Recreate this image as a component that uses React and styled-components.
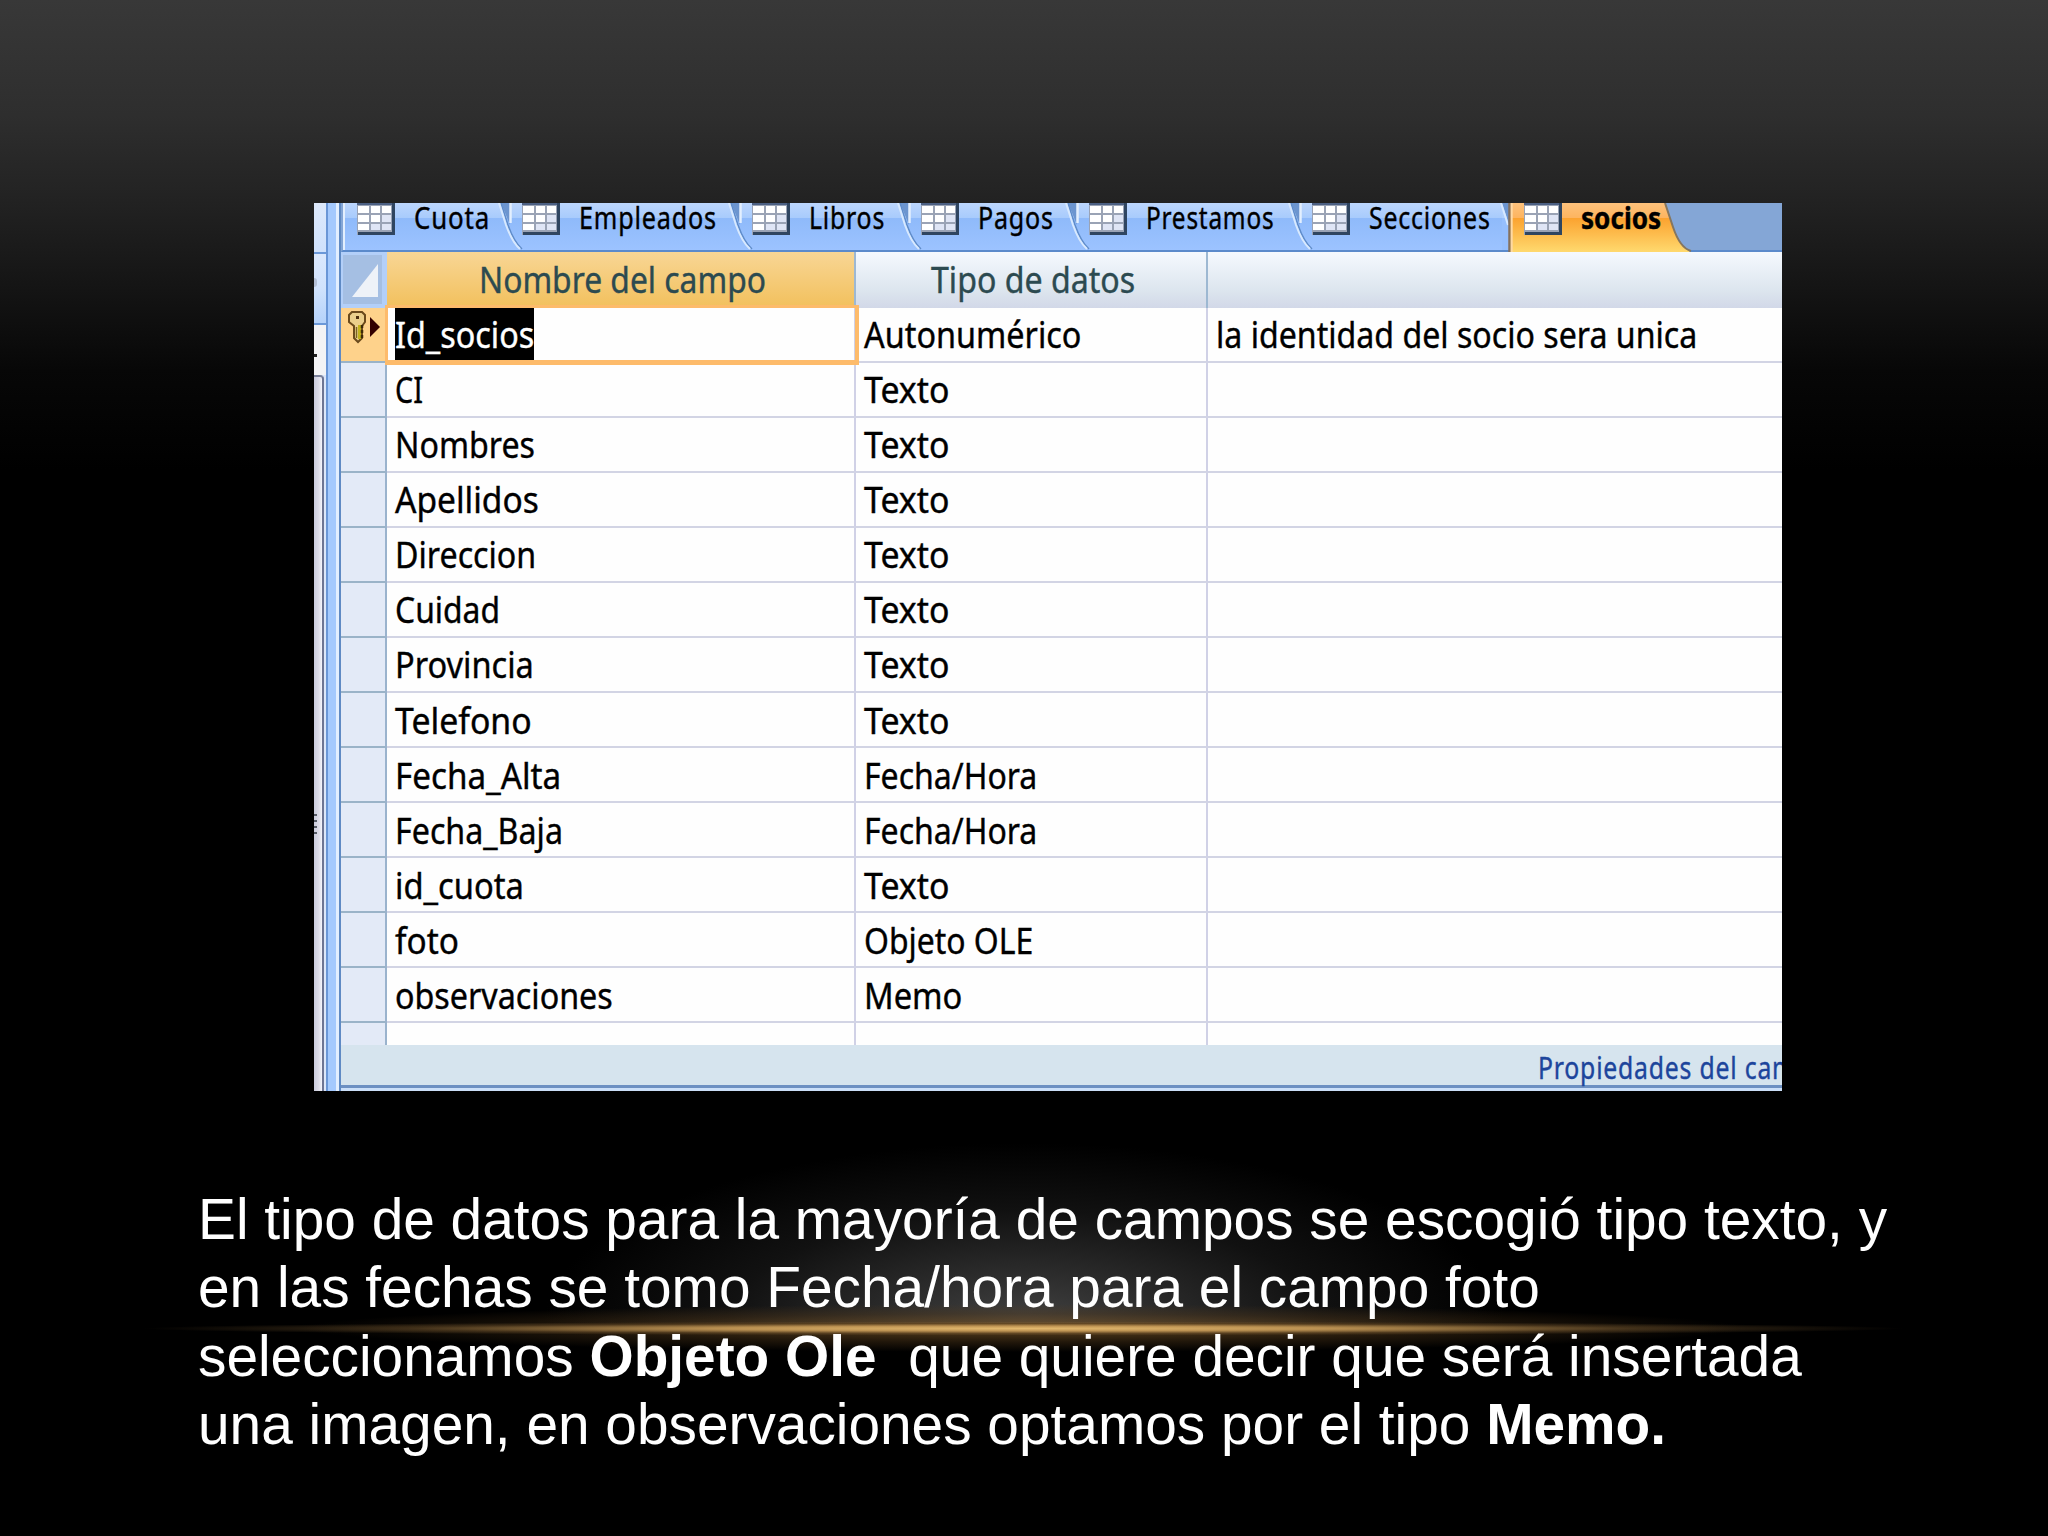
import React, { useLayoutEffect, useRef, useState } from "react";
import styled, { createGlobalStyle } from "styled-components";

const GlobalStyle = createGlobalStyle`
  * {
    box-sizing: border-box;
  }
  body {
    margin: 0;
    background-color: #000;
  }
`;

const Slide = styled.main`
  width: 2048px;
  height: 1536px;
  overflow: hidden;
  display: flex;
  flex-direction: column;
  padding-top: 203px;
  background: radial-gradient(ellipse 880px 7px at 1024px 1328.5px, #e3b96e 0%, rgba(208, 162, 92, 0.85) 35%, rgba(140, 104, 56, 0.4) 70%, transparent 100%),
    radial-gradient(ellipse 720px 24px at 1024px 1328px, rgba(115, 82, 38, 0.8) 0%, rgba(82, 57, 26, 0.4) 60%, transparent 100%),
    radial-gradient(ellipse 480px 180px at 50% 100%, #424242 0%, #2a2a2a 30%, #111 62%, transparent 100%) 0 1129px / 2048px 194px no-repeat,
    linear-gradient(#383838 0, #2e2e2e 115px, #232323 195px, #141414 290px, #070707 370px, #000 470px);
`;

const Window = styled.section`
  width: 1468px;
  height: 888px;
  margin-left: 314px;
  display: flex;
  overflow: hidden;
  font-family: "Noto Sans", "Open Sans", sans-serif;
  color: #000;
`;

const NavPane = styled.div`
  width: 12px;
  display: flex;
  flex-direction: column;
  background-color: #dce6f8;
`;

const NavTitle = styled.div`
  height: 51px;
  background: linear-gradient(#dde9fb, #cfe1fc);
  border-bottom: 2px solid #6b98d8;
`;

const NavGroup = styled.div`
  height: 71px;
  padding-top: 24px;
  background: linear-gradient(#dbe8fd, #d0e2fc 50%, #b5d2fa);
  border-bottom: 2px solid #6b98d8;
`;

const NavArrow = styled.div`
  width: 3px;
  height: 9px;
  border-radius: 0 4px 4px 0;
  background-color: #b3bfd6;
`;

const NavSearch = styled.div`
  height: 50px;
  padding-top: 29px;
  background-color: #f3f3f5;
`;

const NavDash = styled.div`
  width: 3px;
  height: 3px;
  background-color: #222;
`;

const NavScroll = styled.div`
  flex: 1;
  width: 10px;
  padding-top: 437px;
  border-top: 2px solid #7a8099;
  border-right: 2px solid #6d7492;
  border-top-right-radius: 4px;
  background: linear-gradient(90deg, #c9cbdc, #dcdce8 60%, #f4f4fa);
`;

const ScrollGrip = styled.div`
  width: 3px;
  height: 20px;
  background: repeating-linear-gradient(#555b66 0 2px, transparent 2px 6px);
`;

const Splitter = styled.div`
  width: 15px;
  border-left: 2px solid #6a96d6;
  border-right: 2px solid #5f8ac4;
  background: linear-gradient(90deg, #a4c9fd 0 8px, #e2eefe 8px);
`;

const Document = styled.div`
  width: 1441px;
  display: flex;
  flex-direction: column;
  -webkit-text-stroke: 0.4px;
`;

const TabBar = styled.div`
  height: 49px;
  display: flex;
  background-color: #84a6d6;
  border-bottom: 2px solid #5b8acb;
  border-left: 2px solid #84a6d6;
`;

const Tab = styled.div`
  width: ${(props) => props.$width}px;
  height: ${(props) => (props.$active ? 49 : 47)}px;
  flex-shrink: 0;
  display: flex;
  background: ${(props) =>
    props.$active
      ? "linear-gradient(#fdc27c 0, #fdb45f 15px, #fba22f 15px, #ffd96e 49px)"
      : "linear-gradient(#bcd6fd 0, #a8cbfc 15px, #8fbafa 15px, #9cc3ff 47px)"};
`;

const FirstEdge = styled.div`
  width: 14px;
  border-left: 2px solid #e3effe;
`;

const Drawing = styled.svg`
  display: block;
  flex-shrink: 0;
  overflow: visible;
`;

const TabLabel = styled.span`
  margin-left: 19px;
  font-size: 31px;
  line-height: 28px;
  font-weight: ${(props) => (props.$active ? 700 : 400)};
  letter-spacing: ${(props) => (props.$active ? 0 : 1)}px;
`;

const FitBox = styled.span`
  display: block;
  width: ${(props) => props.$width}px;
  flex-shrink: 0;
`;

const FitInner = styled.span`
  display: inline-block;
  white-space: pre;
  vertical-align: top;
  transform-origin: 0 50%;
`;

const HeaderRow = styled.div`
  height: 56px;
  display: flex;
`;

const SelectAll = styled.div`
  width: 46px;
  padding: 3px 5px 4px 2px;
  background-color: #b3cff8;
`;

const HeaderCell = styled.div`
  width: ${(props) => props.$width}px;
  display: flex;
  justify-content: center;
  padding-bottom: 3px;
  padding-left: 3px;
  align-items: center;
  font-size: 37px;
  line-height: 50px;
  color: #2c4a50;
  border-right: ${(props) => (props.$last ? "none" : "2px solid #9db8d2")};
  background: ${(props) =>
    props.$selected
      ? "linear-gradient(#f8d695, #f2c05c)"
      : "linear-gradient(#f5f9fe, #dce5ee 70%, #d2d8e8)"};
`;

const Row = styled.div`
  height: ${(props) => props.$height || 55.08}px;
  display: flex;
  flex-shrink: 0;
`;

const Selector = styled.div`
  width: 46px;
  flex-shrink: 0;
  padding-left: 7px;
  border-right: 2px solid #9ab3cd;
  border-bottom: ${(props) => (props.$partial ? "none" : "2px solid #9ab3c8")};
  background-color: ${(props) => (props.$current ? "#fed28b" : "#e3eaf7")};
`;

const Cell = styled.div`
  position: relative;
  width: ${(props) => props.$width}px;
  flex-shrink: 0;
  display: flex;
  align-items: center;
  padding-left: 8px;
  font-size: 37px;
  line-height: 50px;
  background-color: #fefefe;
  border-right: ${(props) => (props.$last ? "none" : "2px solid #d0d1e6")};
  border-bottom: ${(props) => (props.$partial ? "none" : "2px solid #d2d4e4")};
`;

const FocusRing = styled.div`
  position: absolute;
  z-index: 1;
  top: -3px;
  left: -2px;
  width: 474px;
  height: 60px;
  border: 4px solid #fdbb6b;
  border-left-width: 3px;
  border-top-width: 3px;
  border-bottom-width: 5px;
`;

const Selection = styled.div`
  height: 53px;
  display: flex;
  align-items: center;
  width: 139px;
  color: #fff;
  background-color: #000;
`;

const Footer = styled.div`
  height: 46px;
  padding: 3px 0 0 1197px;
  overflow: hidden;
  font-size: 31px;
  line-height: 39px;
  letter-spacing: 1px;
  color: #1d459c;
  background: linear-gradient(#d6e4ee 0 40px, #6d90c2 40px 43px, #cbdff8 43px);
`;

const Caption = styled.p`
  margin: 95px 0 0 198px;
  font-family: "Liberation Sans", Arial, sans-serif;
  font-size: 56.8px;
  line-height: 68.4px;
  white-space: pre;
  color: #fff;
`;

// Squeezes a run of text so that it takes exactly the given width
const Fit = ({ width, children }) => {
  const ref = useRef(null);
  const [scale, setScale] = useState(1);

  useLayoutEffect(() => {
    setScale(width / ref.current.offsetWidth);
  }, [width, children]);

  return (
    <FitBox $width={width}>
      <FitInner ref={ref} style={{ transform: `scaleX(${scale})` }}>
        {children}
      </FitInner>
    </FitBox>
  );
};

const TableIcon = () => (
  <Drawing width="38" height="32" viewBox="0 0 38 32">
    <rect width="38" height="32" fill="#9aa3b5" />
    <rect width="38" height="2" fill="#4c6083" />
    <rect x="35" width="3" height="32" fill="#2f4560" />
    <rect x="1" y="29" width="37" height="3" fill="#2f4560" />
    {[3, 12, 21].map((y, r) =>
      [1, 14, 25].map((x, c) => (
        <rect
          key={`${x}-${y}`}
          x={x}
          y={y}
          width={c === 0 ? 11 : 9}
          height={r === 2 ? 6 : 7}
          fill={c + r > 2 ? "#dfe5f5" : "#fff"}
        />
      ))
    )}
  </Drawing>
);

const TabEdge = () => (
  <Drawing width="22" height="47" viewBox="0 0 22 47">
    <path d="M1 0H10V22Z" fill="#6c95cf" />
    <path d="M10.5 0V20" stroke="#e3effe" strokeWidth="2.5" />
    <path d="M1 0L8 22Q14 39 22 46" fill="none" stroke="#5f8cc9" strokeWidth="1.5" />
    <path d="M-1 0L6 22Q12 39 20 46" fill="none" stroke="#d8e9fe" strokeWidth="2" />
  </Drawing>
);

const ActiveEdge = () => (
  <Drawing width="22" height="49" viewBox="0 0 22 49">
    <rect width="8" height="15" fill="#b0d0fd" />
    <rect y="15" width="8" height="32" fill="#96bffd" />
    <rect y="47" width="8" height="2" fill="#5b8acb" />
    <path d="M0 0H7V21Z" fill="#6c95cf" />
    <path d="M-1 0L6 22" stroke="#d8e9fe" strokeWidth="2" />
    <path d="M7.5 0V49" stroke="#85715c" strokeWidth="2.5" />
    <path d="M9.7 0V49" stroke="#fed9a4" strokeWidth="2" />
  </Drawing>
);

const ActiveEnd = () => (
  <Drawing width="35" height="49" viewBox="0 0 35 49">
    <path d="M4 0L12 24Q19 45 30 48.5H35.5V0Z" fill="#84a6d6" />
    <path d="M30 47H36V49H28Z" fill="#5b8acb" />
    <path d="M4 0L12 24Q19 45 30 48" fill="none" stroke="#85765f" strokeWidth="2" />
  </Drawing>
);

const KeyIcon = () => (
  <Drawing width="36" height="53" viewBox="0 0 36 53">
    <path
      d="M4 4H14L17 7V14L14 18V30L10 34L6 30V18L1 14V7Z"
      fill="#ebcf8c"
      stroke="#6b4a1c"
      strokeWidth="2"
    />
    <rect x="8" y="8" width="3" height="3" fill="#4d3010" />
    <path d="M11.5 17V31" stroke="#c2b21c" strokeWidth="3" />
    <path d="M14 17V31" stroke="#3c2a08" strokeWidth="2.5" strokeDasharray="3 2" />
    <path d="M8.5 19V30" stroke="#7a6420" strokeWidth="1.5" />
    <path d="M22 9L32 19L22 29Z" fill="#300" />
  </Drawing>
);

const tabs = [
  { name: "Cuota", width: 157, text: 76 },
  { name: "Empleados", width: 230, text: 138 },
  { name: "Libros", width: 169, text: 76 },
  { name: "Pagos", width: 168, text: 76 },
  { name: "Prestamos", width: 223, text: 128 },
  { name: "Secciones", width: 212, text: 122 },
];

const fields = [
  { name: "CI", w: 28, type: "Texto", tw: 85 },
  { name: "Nombres", w: 140, type: "Texto", tw: 85 },
  { name: "Apellidos", w: 144, type: "Texto", tw: 85 },
  { name: "Direccion", w: 141, type: "Texto", tw: 85 },
  { name: "Cuidad", w: 105, type: "Texto", tw: 85 },
  { name: "Provincia", w: 139, type: "Texto", tw: 85 },
  { name: "Telefono", w: 137, type: "Texto", tw: 85 },
  { name: "Fecha_Alta", w: 166, type: "Fecha/Hora", tw: 173 },
  { name: "Fecha_Baja", w: 168, type: "Fecha/Hora", tw: 173 },
  { name: "id_cuota", w: 129, type: "Texto", tw: 85 },
  { name: "foto", w: 64, type: "Objeto OLE", tw: 169 },
  { name: "observaciones", w: 218, type: "Memo", tw: 98 },
];

const App = () => {
  return (
    <>
      <GlobalStyle />
      <Slide>
        <Window>
          <NavPane>
            <NavTitle />
            <NavGroup>
              <NavArrow />
            </NavGroup>
            <NavSearch>
              <NavDash />
            </NavSearch>
            <NavScroll>
              <ScrollGrip />
            </NavScroll>
          </NavPane>
          <Splitter />
          <Document>
            <TabBar>
              {tabs.map((tab, i) => (
                <Tab key={tab.name} $width={tab.width}>
                  {i === 0 ? <FirstEdge /> : <TabEdge />}
                  <TableIcon />
                  <TabLabel>
                    <Fit width={tab.text}>{tab.name}</Fit>
                  </TabLabel>
                </Tab>
              ))}
              <Tab $active $width={194}>
                <ActiveEdge />
                <TableIcon />
                <TabLabel $active>
                  <Fit width={80}>socios</Fit>
                </TabLabel>
                <ActiveEnd />
              </Tab>
            </TabBar>
            <HeaderRow>
              <SelectAll>
                <svg width="39" height="49" viewBox="0 0 39 49">
                  <rect width="39" height="49" fill="#a5bfe3" />
                  <path d="M9 42H35V9Z" fill="#eef2f8" />
                </svg>
              </SelectAll>
              <HeaderCell $selected $width={469}>
                <Fit width={287}>Nombre del campo</Fit>
              </HeaderCell>
              <HeaderCell $width={352}>
                <Fit width={204}>Tipo de datos</Fit>
              </HeaderCell>
              <HeaderCell $last $width={574} />
            </HeaderRow>
            <Row $height={54.5}>
              <Selector $current>
                <KeyIcon />
              </Selector>
              <Cell $width={469}>
                <FocusRing />
                <Selection>
                  <Fit width={139}>Id_socios</Fit>
                </Selection>
              </Cell>
              <Cell $width={352}>
                <Fit width={217}>Autonumérico</Fit>
              </Cell>
              <Cell $last $width={574}>
                <Fit width={481}>la identidad del socio sera unica</Fit>
              </Cell>
            </Row>
            {fields.map((field) => (
              <Row key={field.name}>
                <Selector />
                <Cell $width={469}>
                  <Fit width={field.w}>{field.name}</Fit>
                </Cell>
                <Cell $width={352}>
                  <Fit width={field.tw}>{field.type}</Fit>
                </Cell>
                <Cell $last $width={574} />
              </Row>
            ))}
            <Row $height={21.5}>
              <Selector $partial />
              <Cell $partial $width={469} />
              <Cell $partial $width={352} />
              <Cell $partial $last $width={574} />
            </Row>
            <Footer>
              <Fit width={290}>Propiedades del campo</Fit>
            </Footer>
          </Document>
        </Window>
        <Caption>
          El tipo de datos para la mayoría de campos se escogió tipo texto, y{"\n"}
          en las fechas se tomo Fecha/hora para el campo foto{"\n"}
          seleccionamos <b>Objeto Ole</b>{"  "}que quiere decir que será insertada{"\n"}
          una imagen, en observaciones optamos por el tipo <b>Memo.</b>
        </Caption>
      </Slide>
    </>
  );
};
export default App;
